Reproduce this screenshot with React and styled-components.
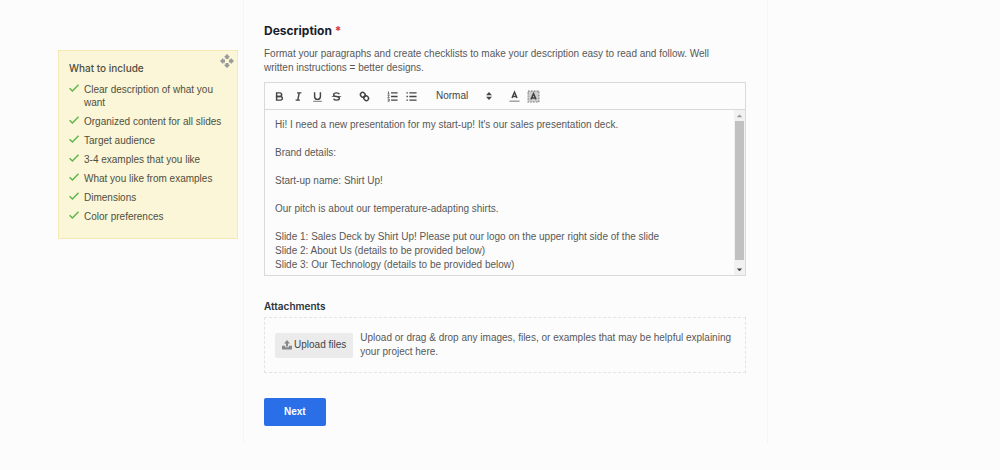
import React, { useState } from "react";
import styled, { createGlobalStyle } from "styled-components";

const tips = [
  "Clear description of what you want",
  "Organized content for all slides",
  "Target audience",
  "3-4 examples that you like",
  "What you like from examples",
  "Dimensions",
  "Color preferences",
];

const brief = `Hi! I need a new presentation for my start-up! It's our sales presentation deck.

Brand details:

Start-up name: Shirt Up!

Our pitch is about our temperature-adapting shirts.

Slide 1: Sales Deck by Shirt Up! Please put our logo on the upper right side of the slide
Slide 2: About Us (details to be provided below)
Slide 3: Our Technology (details to be provided below)`;

const icons = {
  bold: (
    <>
      <path d="M5,4H9.5A2.5,2.5,0,0,1,12,6.5v0A2.5,2.5,0,0,1,9.5,9H5V4Z" />
      <path d="M5,9h5.5A2.5,2.5,0,0,1,13,11.5v0A2.5,2.5,0,0,1,10.5,14H5V9Z" />
    </>
  ),
  italic: <path d="M7,4H13M5,14H11M8,14L10,4" />,
  underline: (
    <>
      <path d="M5,3V9a4,4,0,0,0,8,0V3" />
      <rect x="3" y="15" width="12" height="1" fill="#444" stroke="none" />
    </>
  ),
  strike: (
    <>
      <path d="M2.5,9H15.5" strokeWidth="1" />
      <path d="M12.9,6C12.5,4.8 11,4 9,4C6.700,4 5,5.100 5,6.500C5,8 6.200,8.700 9,9C11.800,9.300 13,10 13,11.500C13,12.900 11.300,14 9,14C7,14 5.500,13.200 5.100,12" />
    </>
  ),
  link: (
    <>
      <path d="M7,11L11,7" />
      <path d="M8.9,4.577a3.476,3.476,0,0,1,.36,4.679A3.476,3.476,0,0,1,4.577,8.9C3.185,7.5,2.035,6.4,4.217,4.217S7.5,3.185,8.9,4.577Z" />
      <path d="M13.423,9.1a3.476,3.476,0,0,0-4.679-.36,3.476,3.476,0,0,0,.36,4.679c1.392,1.392,2.5,2.542,4.679.36S14.815,10.5,13.423,9.1Z" />
    </>
  ),
  ordered: (
    <>
      <path d="M7,4H16M7,9H16M7,14H16" />
      <path
        d="M2.500,2.500H3.500V5.500M2.200,5.500H5M2.200,7.500H4.500L2.500,10.500H5M2.200,12.500H4.500V15.500H2.200M3,14H4.500"
        strokeWidth="1"
      />
    </>
  ),
  bullet: <path d="M6,4H16M6,9H16M6,14H16M2,4H4M2,9H4M2,14H4" />,
  color: (
    <>
      <path d="M2,15.500H16" opacity="0.5" />
      <path d="M5.5,11L9,3L12.5,11M11.6,9H6.400" />
    </>
  ),
  background: (
    <>
      <rect x="1" y="1" width="16" height="16" fill="#444" stroke="none" opacity="0.25" />
      <rect x="1.500" y="1.500" width="15" height="15" strokeWidth="1.5" strokeDasharray="2 2" opacity="0.6" />
      <path d="M5.500,13L9,5L12.5,13M11.6,11H6.400" />
    </>
  ),
};

const Icon = ({ name }) => (
  <svg viewBox="0 0 18 18" width="13" height="13" fill="none" stroke="#444" strokeWidth="2">
    {icons[name]}
  </svg>
);

const ToolButton = ({ name, label }) => (
  <Tool type="button" aria-label={label}>
    <Icon name={name} />
  </Tool>
);

const App = () => {
  const [text, setText] = useState(brief);

  return (
    <Page>
      <GlobalStyle />
      <Side>
        <TipCard>
          <MoveButton type="button" aria-label="Move">
            <svg viewBox="0 0 14 14" width="14" height="14" fill="#999">
              <path d="M7 0L10 3L8.500 3.500V5H5.500V3.500L4 3ZM7 14L4 11L5.500 10.500V9H8.500V10.500L10 11ZM0 7L3 4L3.500 5.500H5V8.500H3.500L3 10ZM14 7L11 10L10.500 8.500H9V5.500H10.500L11 4Z" />
            </svg>
          </MoveButton>
          <TipTitle>What to include</TipTitle>
          <TipList>
            {tips.map((tip) => (
              <Tip key={tip}>
                <svg viewBox="0 0 10 10" width="10" height="10" fill="none" stroke="#5cb548">
                  <path d="M0.600 5.200L3.400 8L9.500 1.800" strokeWidth="1.4" />
                </svg>
                <span>{tip}</span>
              </Tip>
            ))}
          </TipList>
        </TipCard>
      </Side>

      <Main>
        <Title htmlFor="description">
          Description <Required>*</Required>
        </Title>
        <Help>
          Format your paragraphs and create checklists to make your description easy to read and
          follow. Well written instructions = better designs.
        </Help>

        <Editor>
          <Toolbar>
            <ToolGroup>
              <ToolButton name="bold" label="Bold" />
              <ToolButton name="italic" label="Italic" />
              <ToolButton name="underline" label="Underline" />
              <ToolButton name="strike" label="Strikethrough" />
            </ToolGroup>
            <ToolGroup>
              <ToolButton name="link" label="Link" />
            </ToolGroup>
            <ToolGroup>
              <ToolButton name="ordered" label="Numbered list" />
              <ToolButton name="bullet" label="Bulleted list" />
            </ToolGroup>
            <Picker>
              <Format aria-label="Text style">
                <option>Normal</option>
              </Format>
              <svg viewBox="0 0 6 10" width="6" height="10" fill="#444">
                <path d="M0 4.300L3 1L6 4.300ZM0 5.700L3 9L6 5.700Z" />
              </svg>
            </Picker>
            <ToolGroup>
              <ToolButton name="color" label="Text color" />
              <ToolButton name="background" label="Background color" />
            </ToolGroup>
          </Toolbar>
          <EditorBody>
            <TextArea
              id="description"
              spellCheck="false"
              value={text}
              onChange={(e) => setText(e.target.value)}
            />
            <ScrollTrack aria-hidden="true">
              <Arrow viewBox="0 0 10 10">
                <path d="M2 7L5 4L8 7Z" fill="#999" />
              </Arrow>
              <Thumb />
              <Arrow viewBox="0 0 10 10">
                <path d="M2 4L5 7L8 4Z" fill="#444" />
              </Arrow>
            </ScrollTrack>
          </EditorBody>
        </Editor>

        <Subtitle>Attachments</Subtitle>
        <DropZone>
          <UploadButton type="button">
            <svg viewBox="0 0 10 10" width="10" height="10" fill="#888">
              <path d="M5 0L8 3.500H6V6.500H4V3.500H2ZM0 5.800H3.200V7.300H6.800V5.800H10V9.500H0Z" />
            </svg>
            Upload files
          </UploadButton>
          <DropText>
            Upload or drag &amp; drop any images, files, or examples that may be helpful explaining
            your project here.
          </DropText>
        </DropZone>

        <NextButton type="button">Next</NextButton>
      </Main>
    </Page>
  );
};

const GlobalStyle = createGlobalStyle`
  * {
    box-sizing: border-box;
  }

  body {
    margin: 0;
    background-color: #fcfcfc;
    color: #585858;
    font-family: "Liberation Sans", Arial, sans-serif;
    font-size: 10px;
    line-height: 14px;
  }

  button,
  select,
  textarea {
    font: inherit;
    color: inherit;
  }
`;

const Page = styled.div`
  display: grid;
  grid-template-columns: 243px minmax(0, 525fr) minmax(0, 232fr);
  align-items: start;
`;

const Side = styled.aside`
  padding: 50px 5px 0 58px;
`;

const TipCard = styled.section`
  position: relative;
  padding: 10px 10px 15px;
  border: 1px solid #f3eab4;
  background-color: #faf6d7;
  color: #504f3e;
`;

const MoveButton = styled.button`
  position: absolute;
  top: 3px;
  right: 3px;
  display: flex;
  padding: 0;
  border: none;
  background: none;
  cursor: move;
`;

const TipTitle = styled.h2`
  margin: 0 0 8px;
  font-family: Inter, sans-serif;
  font-size: 10px;
  font-weight: 500;
`;

const TipList = styled.ul`
  display: flex;
  flex-direction: column;
  gap: 6px;
  margin: 0;
  padding: 0;
  list-style: none;
  line-height: 13px;
`;

const Tip = styled.li`
  display: flex;
  gap: 5px;
  padding-right: 4px;

  svg {
    flex: none;
  }
`;

const Main = styled.main`
  display: flex;
  flex-direction: column;
  align-items: stretch;
  padding: 22px 21px 18px 20px;
  border: solid #f5f5f5;
  border-width: 0 1px;
`;

const Title = styled.label`
  color: #17202a;
  font-family: Inter, sans-serif;
  font-size: 12px;
  font-weight: 700;
  line-height: 18px;
`;

const Required = styled.span`
  color: #d9362b;
`;

const Help = styled.p`
  margin: 7px 0;
  padding-right: 20px;
`;

const Editor = styled.div`
  border: 1px solid #d9d9d9;
`;

const Toolbar = styled.div`
  display: flex;
  align-items: center;
  gap: 9px;
  height: 27px;
  padding: 0 5px;
  border-bottom: 1px solid #d9d9d9;
`;

const ToolGroup = styled.div`
  display: flex;
`;

const Tool = styled.button`
  display: flex;
  justify-content: center;
  width: 19px;
  padding: 0;
  border: none;
  background: none;
  cursor: pointer;
`;

const Picker = styled.div`
  display: flex;
  align-items: center;
  width: 66px;
  padding: 0 4px 0 6px;
  color: #444;
`;

const Format = styled.select`
  flex: 1;
  min-width: 0;
  padding: 0;
  border: none;
  background: none;
  appearance: none;
`;

const EditorBody = styled.div`
  display: flex;
  height: 165px;
`;

const TextArea = styled.textarea`
  flex: 1;
  min-width: 0;
  padding: 8px 10px 0;
  border: none;
  outline: none;
  background: none;
  overflow: hidden;
  resize: none;
`;

const ScrollTrack = styled.div`
  display: flex;
  flex-direction: column;
  width: 11px;
  padding: 0 1px;
  background-color: #f1f1f1;
`;

const Arrow = styled.svg`
  width: 9px;
  height: 11px;
`;

const Thumb = styled.div`
  flex: 1;
  margin-bottom: 4px;
  background-color: #c1c1c1;
`;

const Subtitle = styled.h2`
  margin: 23px 0 4px;
  color: #2a333c;
  font-family: Inter, sans-serif;
  font-size: 10px;
  font-weight: 600;
`;

const DropZone = styled.div`
  display: flex;
  align-items: center;
  gap: 7px;
  padding: 13px 10px;
  border: 1px dashed #e4e4e4;
`;

const UploadButton = styled.button`
  display: flex;
  flex: none;
  align-items: center;
  gap: 2px;
  height: 25px;
  padding: 0 7px;
  border: none;
  border-radius: 2px;
  background-color: #ebebeb;
  color: #444;
  cursor: pointer;
`;

const DropText = styled.p`
  margin: 0;
`;

const NextButton = styled.button`
  align-self: flex-start;
  margin-top: 25px;
  padding: 7px 20px;
  border: none;
  border-radius: 2px;
  background-color: #2a6fe8;
  color: #fff;
  font-weight: bold;
  cursor: pointer;
`;

export default App;
